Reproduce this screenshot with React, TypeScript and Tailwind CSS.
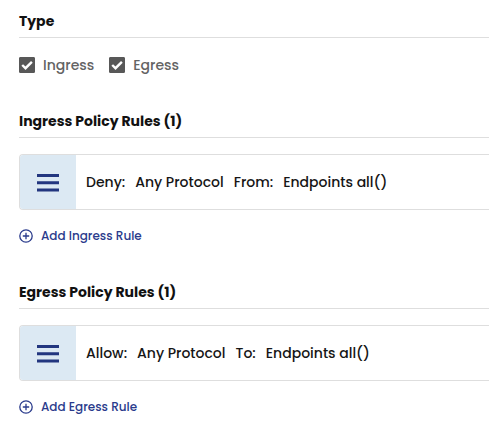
import { useState, type ReactNode } from "react";

function SectionHeading({ children }: { children: ReactNode }) {
  return (
    <h2 className="border-b border-[#dedede] pb-1 text-[14px] leading-6 font-bold text-[#111]">
      {children}
    </h2>
  );
}

function TypeCheckbox({ label }: { label: string }) {
  const [checked, setChecked] = useState(true);
  return (
    <label className="flex items-center gap-2 text-[14px] font-medium text-[#636363]">
      <span className="grid size-4 place-items-center">
        <input
          type="checkbox"
          checked={checked}
          onChange={(e) => setChecked(e.target.checked)}
          className="col-start-1 row-start-1 size-4 appearance-none rounded-[1px] border border-[#585858] checked:bg-[#585858]"
        />
        {checked && (
          <svg
            viewBox="0 0 16 16"
            className="pointer-events-none col-start-1 row-start-1 size-4"
            fill="none"
            stroke="#fff"
            strokeWidth="2.4"
            aria-hidden="true"
          >
            <path d="M3.2 8 6.5 11.2 12.9 4.8" />
          </svg>
        )}
      </span>
      {label}
    </label>
  );
}

function RuleCard({ parts }: { parts: string[] }) {
  return (
    <div className="mt-4 flex h-14 overflow-hidden rounded-l border border-r-0 border-[#dedede]">
      <button
        type="button"
        aria-label="Reorder rule"
        className="grid w-14 shrink-0 place-items-center bg-[#dce9f3] pt-0.5"
      >
        <svg viewBox="0 0 22 18" className="h-[18px] w-[22px]" fill="#22367f" aria-hidden="true">
          <path d="M0 0h22v3H0zM0 7.2h22v3H0zM0 14.4h22v3H0z" />
        </svg>
      </button>
      <p className="flex items-center gap-[10px] pl-[10px] text-[14px] font-medium whitespace-nowrap text-[#161616]">
        {parts.map((part) => (
          <span key={part}>{part}</span>
        ))}
      </p>
    </div>
  );
}

function AddRuleButton({ children }: { children: ReactNode }) {
  return (
    <button
      type="button"
      className="mt-4 flex h-5 items-center gap-2 text-[12px] font-medium text-[#2a3b8c]"
    >
      <svg
        viewBox="0 0 14 14"
        className="size-[14px]"
        fill="none"
        stroke="currentColor"
        strokeWidth="1.3"
        aria-hidden="true"
      >
        <circle cx="7" cy="7" r="6.2" />
        <path d="M7 3.8v6.4M3.8 7h6.4" />
      </svg>
      {children}
    </button>
  );
}

export default function App() {
  return (
    <main className="flex flex-col gap-[34px] bg-white pt-[9px] pb-4 pl-[19px] font-[Poppins,Inter,sans-serif]">
      <section>
        <SectionHeading>Type</SectionHeading>
        <div className="mt-[17px] flex h-5 items-center gap-[15px]">
          <TypeCheckbox label="Ingress" />
          <TypeCheckbox label="Egress" />
        </div>
      </section>
      <section>
        <SectionHeading>Ingress Policy Rules (1)</SectionHeading>
        <RuleCard parts={["Deny:", "Any Protocol", "From:", "Endpoints all()"]} />
        <AddRuleButton>Add Ingress Rule</AddRuleButton>
      </section>
      <section>
        <SectionHeading>Egress Policy Rules (1)</SectionHeading>
        <RuleCard parts={["Allow:", "Any Protocol", "To:", "Endpoints all()"]} />
        <AddRuleButton>Add Egress Rule</AddRuleButton>
      </section>
    </main>
  );
}
